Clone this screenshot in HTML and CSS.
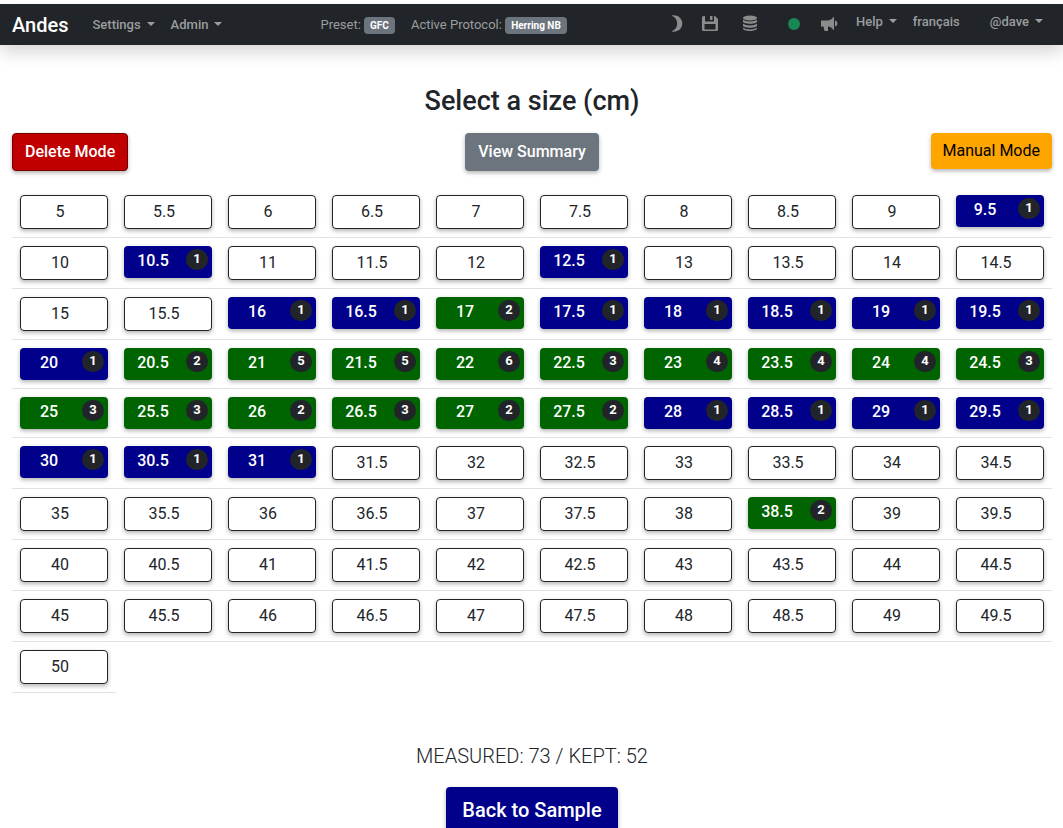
FILE: index.html
```html
<!DOCTYPE html>
<html lang="en">
<head>
<meta charset="utf-8">
<meta name="viewport" content="width=device-width, initial-scale=1">
<title>Andes</title>
<link rel="stylesheet" href="styles.css">
</head>
<body>
<nav class="navbar">
  <a class="brand" href="#">Andes</a>
  <div class="menu">
    <button type="button" class="nav-link dropdown">Settings</button>
    <button type="button" class="nav-link dropdown">Admin</button>
  </div>
  <div class="status">
    <span>Preset: <span class="tag">GFC</span></span>
    <span>Active Protocol: <span class="tag">Herring NB</span></span>
  </div>
  <div class="tools">
    <button type="button" class="icon-button moon" aria-label="Dark mode">
      <svg width="12" height="20" viewBox="4 0 12 20"><path d="M4.500 1.500C10 .3 15.300 4 15.300 9.500S10 18.700 4.500 17.500C8.300 16 10.200 13 10.200 9.500S8.300 3 4.500 1.500z"/></svg>
    </button>
    <button type="button" class="icon-button" aria-label="Save">
      <svg width="18" height="20" viewBox="0 0 18 20"><path fill-rule="evenodd" d="M2.500 2h1.500v5.500h9v-5.500h1l3 3v10.500a1.500 1.500 0 0 1-1.500 1.500h-13a1.500 1.500 0 0 1-1.500-1.500v-12a1.500 1.500 0 0 1 1.500-1.500zM3.500 10v5.500h11v-5.500zM9 2h2.500v4h-2.500z"/></svg>
    </button>
    <button type="button" class="icon-button" aria-label="Database">
      <svg width="18" height="20" viewBox="0 0 18 20"><ellipse cx="9" cy="4" rx="7" ry="2.500"/><path d="M2 5.500c2 2.500 12 2.500 14 0v2c0 3-14 3-14 0zM2 9.500c2 2.500 12 2.500 14 0v2c0 3-14 3-14 0zM2 13.500c2 2.500 12 2.500 14 0v1c0 3.300-14 3.300-14 0z"/></svg>
    </button>
    <span class="online" role="img" aria-label="Online"></span>
    <button type="button" class="icon-button" aria-label="Announcements">
      <svg width="18" height="20" viewBox="0 0 18 20"><path d="M1 6.500h6.500c2.500 0 4.500-1.500 6.500-4v14c-2-2.500-4-4-6-4v4.500h-3.500l-1-4.500h-2.500zM15 6.500c3.200.500 3.200 5.500 0 6z"/></svg>
    </button>
  </div>
  <div class="account">
    <button type="button" class="nav-link dropdown">Help</button>
    <a class="nav-link" href="#">français</a>
    <button type="button" class="nav-link dropdown user">@dave</button>
  </div>
</nav>
<main class="page">
  <h1 class="title">Select a size (cm)</h1>
  <div class="actions">
    <button type="button" class="btn btn-delete">Delete Mode</button>
    <button type="button" class="btn btn-summary">View Summary</button>
    <button type="button" class="btn btn-manual">Manual Mode</button>
  </div>
  <table class="sizes" aria-label="Sizes in centimetres">
    <tbody id="sizes"></tbody>
  </table>
  <p class="totals">MEASURED: 73 / KEPT: 52</p>
  <a class="btn btn-back" href="#">Back to Sample</a>
</main>
<script src="script.js"></script>
</body>
</html>
```
FILE: styles.css
```css
* { box-sizing: border-box; }

body {
  margin: 0;
  padding-top: 4px;
  background: #fff;
  color: #212529;
  font-family: Roboto, "Liberation Sans", sans-serif;
  font-size: 16px;
  line-height: 24px;
}

button { font-family: inherit; cursor: pointer; }
a { text-decoration: none; }

.navbar {
  display: flex;
  align-items: center;
  height: 41px;
  padding: 0 12px;
  background: #212529;
  box-shadow: 0 8px 16px rgba(0, 0, 0, .15);
  color: #9b9d9f;
  font-size: 13px;
  line-height: 20px;
}

.brand { color: #fff; font-size: 20px; font-weight: 500; }

.nav-link {
  padding: 0;
  border: 0;
  background: none;
  color: inherit;
  font-size: 13px;
  font-weight: 500;
  line-height: 20px;
}

.dropdown::after {
  content: "";
  display: inline-block;
  margin-left: 6px;
  border: 4px solid transparent;
  border-top-color: currentColor;
  border-bottom: 0;
  vertical-align: 3px;
}

.menu { display: flex; gap: 16px; margin-left: 24px; }
.status { display: flex; gap: 16px; margin-left: 98px; }

.tag {
  display: inline-block;
  padding: 3px 6px;
  border-radius: 4px;
  background: #6c757d;
  color: #fff;
  font-size: 10px;
  font-weight: 700;
  line-height: 11px;
}

.tools {
  display: flex;
  align-items: center;
  gap: 22px;
  margin: 0 0 2px auto;
}

.icon-button {
  display: flex;
  padding: 0;
  border: 0;
  background: none;
  fill: #8c8c8c;
}

.moon { margin-right: -4px; }

.online {
  width: 12px;
  height: 12px;
  margin: 0 -2px 0 7px;
  border-radius: 50%;
  background: #198754;
}

.account { display: flex; gap: 16px; margin: 0 8px 6px 18px; }
.user { margin-left: 14px; }

.page {
  display: flex;
  flex-direction: column;
  align-items: center;
  padding: 40px 11px 0 12px;
}

.title { margin: 0; font-size: 27px; font-weight: 500; line-height: 32px; }

.actions {
  display: grid;
  grid-template-columns: 1fr auto 1fr;
  align-items: start;
  width: 100%;
  margin: 16px 0;
}

.btn {
  padding: 6px 12px;
  border: 1px solid transparent;
  border-radius: 4px;
  box-shadow: 0 2px 4px rgba(0, 0, 0, .3);
  color: #fff;
  font-size: 16px;
  font-weight: 500;
  line-height: 24px;
}

.btn-delete { justify-self: start; border-color: #700000; background: #c00000; }
.btn-summary { background: #6c757d; }

.btn-manual {
  justify-self: end;
  border: 0;
  background: #ffa500;
  color: #000;
  font-weight: 400;
}

.sizes {
  width: 100%;
  table-layout: fixed;
  border-collapse: separate;
  border-spacing: 0;
}

.sizes td {
  padding: 8px;
  border-bottom: 1px solid #dee2e6;
  vertical-align: top;
}

.sizes .blank { border: 0; }

.size {
  display: flex;
  align-items: flex-end;
  width: 100%;
  padding: 4px 8px 4px 0;
  border: 1px solid #212529;
  border-radius: 4px;
  background: #fff;
  box-shadow: 0 2px 4px rgba(0, 0, 0, .3);
  color: #212529;
  font-size: 16px;
  line-height: 24px;
}

.value { flex: 1; text-align: center; }

.measured {
  padding: 3px 4px 5px 0;
  border: 0;
  background: #00008b;
  color: #fff;
  font-weight: 500;
}

.kept { background: #006400; }

.count {
  width: 22px;
  margin: 0 0 3px 4px;
  padding-bottom: 1px;
  border-radius: 11px;
  background: #212529;
  font-size: 13px;
  font-weight: 700;
  line-height: 20px;
}

.totals { margin: 51px 0 19px; font-size: 20px; font-weight: 300; }

.btn-back { padding: 8px 16px; border: 0; font-size: 20px; line-height: 30px; background: #00008b; }
```
FILE: script.js
```js
const counts = {
  9.5: 1, 10.5: 1, 12.5: 1,
  16: 1, 16.5: 1, 17: 2, 17.5: 1, 18: 1, 18.5: 1, 19: 1, 19.5: 1,
  20: 1, 20.5: 2, 21: 5, 21.5: 5, 22: 6, 22.5: 3, 23: 4, 23.5: 4, 24: 4, 24.5: 3,
  25: 3, 25.5: 3, 26: 2, 26.5: 3, 27: 2, 27.5: 2, 28: 1, 28.5: 1, 29: 1, 29.5: 1,
  30: 1, 30.5: 1, 31: 1, 38.5: 2
};

function sizeCell(size) {
  if (size > 50) return '<td class="blank"></td>';
  const count = counts[size];
  const state = count ? (count > 1 ? " measured kept" : " measured") : "";
  const badge = count ? `<span class="count">${count}</span>` : "";
  return `<td><button type="button" class="size${state}"><span class="value">${size}</span>${badge}</button></td>`;
}

let rows = "";
for (let start = 5; start <= 50; start += 5) {
  rows += "<tr>";
  for (let i = 0; i < 10; i++) rows += sizeCell(start + i / 2);
  rows += "</tr>";
}
document.getElementById("sizes").innerHTML = rows;
```
